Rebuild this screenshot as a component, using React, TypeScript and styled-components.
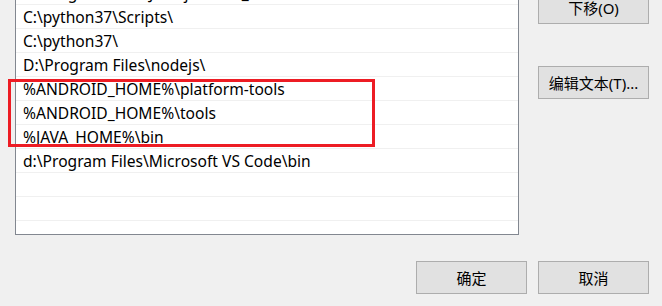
import styled, { createGlobalStyle } from 'styled-components'

const GlobalStyle = createGlobalStyle`
    html, body {
        margin: 0;
        padding: 0;
        background: #f0f0f0;
    }
    * {
        box-sizing: border-box;
    }
`

const Dialog = styled.div`
    width: 662px;
    height: 306px;
    overflow: hidden;
    background: #f0f0f0;
    font-family: "Noto Sans", "Noto Sans CJK SC", sans-serif;
    position: relative;
`
const TopRow = styled.div`
    display: flex;
    align-items: flex-start;
    margin-top: -20px;
`
const PathList = styled.ul`
    list-style: none;
    margin: 0 0 0 15px;
    padding: 0;
    width: 504px;
    height: 255px;
    background: #fff;
    border: 1px solid #828790;
    overflow: hidden;
`
const PathRow = styled.li`
    height: 24px;
    border-bottom: 1px solid #f0f0f0;
    padding-left: 7px;
    display: flex;
    align-items: center;
    font-size: 15.6px;
    color: #000;
    white-space: nowrap;
`
const SideButtons = styled.div`
    display: flex;
    flex-direction: column;
    gap: 42px;
    margin-left: 19px;
    padding-top: 11px;
`
const Button = styled.button`
    width: 111px;
    height: 33px;
    background: #e1e1e1;
    border: 1px solid #adadad;
    font-family: "Noto Sans", "Noto Sans CJK SC", sans-serif;
    font-size: 15px;
    color: #000;
    padding: 0;
    display: flex;
    align-items: center;
    justify-content: center;
`
const BottomRow = styled.div`
    display: flex;
    justify-content: flex-end;
    gap: 11px;
    margin-top: 26px;
    padding-right: 13px;
`
const Highlight = styled.div`
    position: absolute;
    left: 8px;
    top: 79px;
    width: 367px;
    height: 68px;
    border: 3px solid #ed1c24;
    pointer-events: none;
`

const paths = [
    'C:\\Program Files\\Java\\jdk1.8.0_201\\bin',
    'C:\\python37\\Scripts\\',
    'C:\\python37\\',
    'D:\\Program Files\\nodejs\\',
    '%ANDROID_HOME%\\platform-tools',
    '%ANDROID_HOME%\\tools',
    '%JAVA_HOME%\\bin',
    'd:\\Program Files\\Microsoft VS Code\\bin',
    '',
    '',
    '',
]

const App = () => {
    return (
        <>
            <GlobalStyle />
            <Dialog>
                <TopRow>
                    <PathList>
                        {paths.map((p, i) => (
                            <PathRow key={i}>{p}</PathRow>
                        ))}
                    </PathList>
                    <SideButtons>
                        <Button>下移(O)</Button>
                        <Button>编辑文本(T)...</Button>
                    </SideButtons>
                </TopRow>
                <BottomRow>
                    <Button>确定</Button>
                    <Button>取消</Button>
                </BottomRow>
                <Highlight />
            </Dialog>
        </>
    )
}

export default App
